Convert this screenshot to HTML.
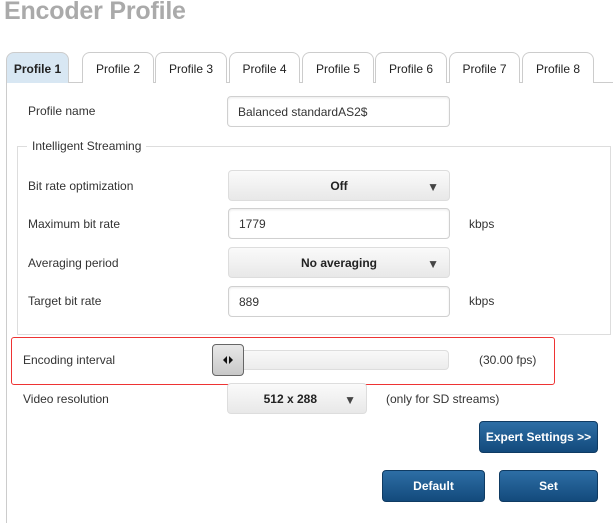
<!DOCTYPE html>
<html><head><style>
body{margin:0;width:613px;height:506px;background:#fff;font-family:"Liberation Sans",sans-serif;font-size:12px;color:#333;position:relative;overflow:hidden}
.a{position:absolute}
h1{position:absolute;left:4px;top:-3px;margin:0;font-size:25px;color:#aaa;font-weight:bold;letter-spacing:-0.2px}
.tab{position:absolute;top:52px;height:30px;border:1px solid #ccc;border-bottom:none;border-radius:8px 8px 0 0;background:#fff;text-align:center;line-height:32px;font-size:12px;color:#222}
.lbl{position:absolute;font-size:12px;color:#333}
.inp{position:absolute;border:1px solid #d0d0d0;border-radius:4px;background:#fff;box-shadow:inset 0 1px 2px rgba(0,0,0,.08);font-size:12px;line-height:30px;padding-left:10px;box-sizing:border-box;height:31px}
.sel{position:absolute;border:1px solid #ddd;border-radius:4px;background:linear-gradient(#fafafa,#e8e8e8);font-weight:bold;font-size:12px;text-align:center;line-height:30px;box-sizing:border-box;height:31px;color:#222}
.sel span{position:absolute;right:10px;top:1px;font-size:12px;color:#444}
.btn{position:absolute;border-radius:4px;background:linear-gradient(#2d6ea5,#134a7c);color:#fff;font-weight:bold;text-align:center;border:1px solid #0f3b63;box-sizing:border-box;font-size:12px}
</style></head><body>
<h1>Encoder Profile</h1>
<div class="a" style="left:6px;top:82px;width:620px;height:440px;border-left:1px solid #ccc;border-top:1px solid #ccc"></div>
<div class="tab" style="left:6px;width:61px;background:#d8e7f3;font-weight:bold">Profile 1</div>
<div class="tab" style="left:82px;width:70px">Profile 2</div>
<div class="tab" style="left:155px;width:70px">Profile 3</div>
<div class="tab" style="left:229px;width:69px">Profile 4</div>
<div class="tab" style="left:302px;width:70px">Profile 5</div>
<div class="tab" style="left:375px;width:70px">Profile 6</div>
<div class="tab" style="left:449px;width:69px">Profile 7</div>
<div class="tab" style="left:522px;width:70px">Profile 8</div>

<div class="lbl" style="left:28px;top:104px">Profile name</div>
<div class="inp" style="left:227px;top:96px;width:223px">Balanced standardAS2$</div>

<div class="a" style="left:17px;top:146px;width:592px;height:187px;border:1px solid #ddd"></div>
<div class="lbl" style="left:27px;top:139px;background:#fff;padding:0 5px">Intelligent Streaming</div>

<div class="lbl" style="left:28px;top:179px">Bit rate optimization</div>
<div class="sel" style="left:228px;top:170px;width:222px">Off<span>▼</span></div>
<div class="lbl" style="left:28px;top:217px">Maximum bit rate</div>
<div class="inp" style="left:228px;top:208px;width:222px">1779</div>
<div class="lbl" style="left:469px;top:217px">kbps</div>
<div class="lbl" style="left:28px;top:256px">Averaging period</div>
<div class="sel" style="left:228px;top:247px;width:222px">No averaging<span>▼</span></div>
<div class="lbl" style="left:28px;top:294px">Target bit rate</div>
<div class="inp" style="left:228px;top:286px;width:222px">889</div>
<div class="lbl" style="left:469px;top:294px">kbps</div>

<div class="a" style="left:11px;top:337px;width:542px;height:46px;border:1px solid #e33;border-radius:3px"></div>
<div class="lbl" style="left:23px;top:353px">Encoding interval</div>
<div class="a" style="left:213px;top:350px;width:236px;height:20px;border:1px solid #ddd;border-radius:4px;background:linear-gradient(#f8f8f8,#ececec);box-sizing:border-box"></div>
<div class="a" style="left:212px;top:344px;width:32px;height:32px;border:1px solid #666;border-radius:4px;background:linear-gradient(#e8e8e8,#c8c8c8);box-sizing:border-box"></div>
<svg class="a" style="left:212px;top:344px" width="32" height="32"><path d="M11 16l4-4v8z M21 16l-4-4v8z" fill="#111"/></svg>
<div class="lbl" style="left:479px;top:353px">(30.00 fps)</div>

<div class="lbl" style="left:23px;top:392px">Video resolution</div>
<div class="sel" style="left:227px;top:383px;width:140px">512 x 288&nbsp;&nbsp;&nbsp;&nbsp;<span>▼</span></div>
<div class="lbl" style="left:386px;top:392px">(only for SD streams)</div>

<div class="btn" style="left:479px;top:421px;width:119px;height:32px;line-height:30px">Expert Settings &gt;&gt;</div>
<div class="btn" style="left:382px;top:470px;width:103px;height:32px;line-height:30px">Default</div>
<div class="btn" style="left:499px;top:470px;width:99px;height:32px;line-height:30px">Set</div>
</body></html>
